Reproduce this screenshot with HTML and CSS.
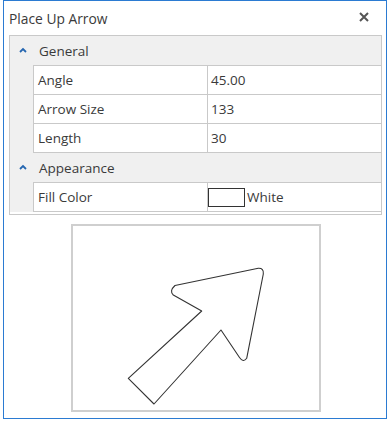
FILE: index.html
```html
<!DOCTYPE html>
<html lang="en">
<head>
  <meta charset="UTF-8" />
  <title>Place Up Arrow</title>
  <link rel="stylesheet" href="styles.css">
</head>
<body>
  <div class="window">
    <div class="titlebar">
      <span class="title">Place Up Arrow</span>
      <svg class="close" width="10" height="10" viewBox="0 0 10 10">
        <path d="M1 1 L9 9 M9 1 L1 9" stroke="#555" stroke-width="2" />
      </svg>
    </div>

    <div class="grid">
      <div class="cat">
        <svg class="chev" width="8" height="6" viewBox="0 0 8 6"><path d="M1 5 L4 2 L7 5" fill="none" stroke="#2566b0" stroke-width="1.8" /></svg>
        General
      </div>
      <div class="group">
        <div class="gutter"></div>
        <div class="cells">
          <div class="prop"><div class="name">Angle</div><div class="value">45.00</div></div>
          <div class="prop"><div class="name">Arrow Size</div><div class="value">133</div></div>
          <div class="prop"><div class="name">Length</div><div class="value">30</div></div>
        </div>
      </div>

      <div class="cat">
        <svg class="chev" width="8" height="6" viewBox="0 0 8 6"><path d="M1 5 L4 2 L7 5" fill="none" stroke="#2566b0" stroke-width="1.8" /></svg>
        Appearance
      </div>
      <div class="group">
        <div class="gutter"></div>
        <div class="cells">
          <div class="prop"><div class="name">Fill Color</div><div class="value"><span class="swatch"></span>White</div></div>
        </div>
      </div>
    </div>

    <div class="preview">
      <svg width="246" height="184" viewBox="73 226 246 184">
        <path d="M201.7 311 L173.3 295 Q169 291 175 285.5 L258.3 268.3 Q264 268 263.3 274 L246.7 358.3 Q243.3 363 239.5 357.5 L221 330 L154 404 L128.3 378.3 Z"
              fill="#fff" stroke="#333" stroke-width="1.1" stroke-linejoin="round" />
      </svg>
    </div>
  </div>
</body>
</html>
```

FILE: styles.css
```css
body { margin: 0; background: #fff; font-family: "Open Sans", "Noto Sans", sans-serif; font-size: 13.5px; color: #3a3a3a; }
.window { margin-left: 3px; width: 382px; height: 417px; border: 1px solid #2b7bd2; background: #fff; }

.titlebar { height: 34px; display: flex; align-items: center; justify-content: space-between; padding: 0 17px 0 5px; }
.title { font-size: 13.8px; }
.close { margin-top: -2px; }

.grid { margin: 0 4px 0 5px; border: 1px solid #c9c9c9; padding-bottom: 2px; }
.cat { height: 29px; background: #f0f0f0; display: flex; align-items: center; padding-left: 9px; }
.chev { margin-right: 12px; margin-top: -1px; }
.group { display: flex; }
.gutter { width: 23px; background: #f0f0f0; }
.cells { flex: 1; border-left: 1px solid #c9c9c9; border-top: 1px solid #c9c9c9; }
.prop { display: flex; height: 28px; border-bottom: 1px solid #c9c9c9; }
.name { width: 169px; padding-left: 4px; border-right: 1px solid #c9c9c9; display: flex; align-items: center; }
.value { flex: 1; padding-left: 3px; display: flex; align-items: center; }
.swatch { width: 35px; height: 17px; border: 1.5px solid #333; margin: 0 2px 0 -3px; }

.preview { margin: 9px 0 0 67px; width: 246px; height: 184px; border: 2px solid #cfcfcf; }
.preview svg { display: block; }
```
